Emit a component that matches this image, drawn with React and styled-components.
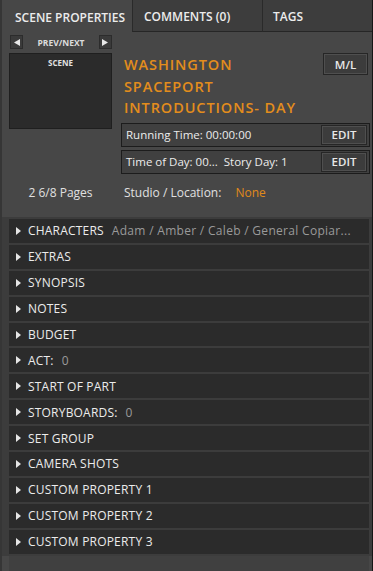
import React from 'react';
import styled, { createGlobalStyle } from 'styled-components';

const GlobalStyle = createGlobalStyle`
  html, body {
    margin: 0;
    padding: 0;
    background: #474747;
  }
  * {
    box-sizing: border-box;
  }
`;

const Panel = styled.div`
  width: 373px;
  height: 571px;
  background: #474747;
  border-left: 2px solid #363636;
  border-right: 1px solid #161616;
  font-family: "Open Sans", "Noto Sans", sans-serif;
  color: #e4e4e4;
  display: flex;
  flex-direction: column;
  overflow: hidden;
`;

const TabBar = styled.div`
  display: flex;
  height: 32px;
  flex-shrink: 0;
`;

const Tab = styled.div`
  width: ${p => p.$w}px;
  flex: ${p => (p.$grow ? 1 : 'none')};
  display: flex;
  align-items: center;
  padding: 2px 0 0 ${p => p.$pl}px;
  font-size: 12px;
  font-weight: 600;
  white-space: nowrap;
  color: #ececec;
  background: ${p => (p.$active ? '#474747' : '#3d3d3d')};
  border-bottom: ${p => (p.$active ? 'none' : '1px solid #262626')};
  border-left: ${p => (p.$active ? 'none' : '1px solid #2a2a2a')};
`;

const Top = styled.div`
  display: grid;
  grid-template-columns: 103px 1fr;
  column-gap: 9px;
  padding: 3px 2px 0 7px;
`;

const LeftCol = styled.div`
  display: flex;
  flex-direction: column;
`;

const NavRow = styled.div`
  display: flex;
  align-items: center;
  justify-content: space-between;
  height: 14px;
  padding-left: 1px;
`;

const ArrowBtn = styled.div`
  width: 13px;
  height: 14px;
  background: #3a3a3a;
  border: 1px solid #2c2c2c;
  display: flex;
  align-items: center;
  justify-content: center;
`;

const NavLabel = styled.span`
  font-size: 8.5px;
  font-weight: 700;
  color: #dcdcdc;
`;

const Thumb = styled.div`
  margin-top: 4px;
  height: 76px;
  background: #2b2b2b;
  border: 1px solid #1f1f1f;
  display: flex;
  justify-content: center;
  padding-top: 3px;
  font-size: 8px;
  font-weight: 700;
  color: #e0e0e0;
`;

const Pages = styled.div`
  margin-top: 55px;
  text-align: center;
  font-size: 12px;
  color: #e0e0e0;
`;

const RightCol = styled.div`
  display: flex;
  flex-direction: column;
  padding-top: 18px;
`;

const Header = styled.div`
  display: flex;
  justify-content: space-between;
  align-items: flex-start;
  padding-left: 3px;
`;

const Title = styled.div`
  margin-top: 1px;
  font-size: 14.5px;
  font-weight: 600;
  line-height: 21.5px;
  letter-spacing: 0.9px;
  color: #e38d1c;
`;

const SmallBtn = styled.div`
  width: ${p => p.$w}px;
  height: ${p => p.$h}px;
  margin-right: ${p => p.$mr || 0}px;
  background: #3c3c3c;
  border: 1px solid #262626;
  box-shadow: inset 0 0 0 1px #4f4f4f;
  display: flex;
  align-items: center;
  justify-content: center;
  font-size: 11.5px;
  font-weight: 600;
  color: #e8e8e8;
  flex-shrink: 0;
`;

const Field = styled.div`
  margin-top: ${p => p.$mt}px;
  height: 24px;
  border: 1px solid #1c1c1c;
  background: #404040;
  display: flex;
  align-items: center;
  justify-content: space-between;
  padding-left: 4px;
  font-size: 11.5px;
  color: #ececec;
`;

const Studio = styled.div`
  margin-top: 10px;
  padding-left: 3px;
  font-size: 12px;
  color: #e0e0e0;
  display: flex;
  gap: 14px;
`;

const Orange = styled.span`
  color: #e08a1a;
`;

const List = styled.div`
  margin-top: 16px;
  padding: 2px 3px 2px 7px;
  background: #3c3c3c;
  display: flex;
  flex-direction: column;
  gap: 2px;
`;

const Row = styled.div`
  height: 23.9px;
  background: #2b2b2b;
  display: flex;
  align-items: center;
  padding-left: 7px;
  font-size: 12px;
  white-space: nowrap;
  overflow: hidden;
`;

const Caret = styled.span`
  width: 0;
  height: 0;
  border-top: 4px solid transparent;
  border-bottom: 4px solid transparent;
  border-left: 5px solid #e6e6e6;
  margin-right: 7px;
  flex-shrink: 0;
`;

const RowLabel = styled.span`
  font-weight: 500;
  color: #ececec;
  letter-spacing: 0.2px;
`;

const RowValue = styled.span`
  margin-left: 8px;
  color: #9a9a9a;
  letter-spacing: 0.3px;
`;

const Footer = styled.div`
  flex: 1;
  background: #404040;
  margin: 0 3px 0 7px;
`;

const Tri = ({ dir }) => (
  <svg width="6" height="7" viewBox="0 0 6 7">
    {dir === 'left'
      ? <polygon points="6,0 6,7 0,3.5" fill="#e6e6e6" />
      : <polygon points="0,0 0,7 6,3.5" fill="#e6e6e6" />}
  </svg>
);

const rows = [
  { label: 'CHARACTERS', value: 'Adam / Amber / Caleb / General Copiar...' },
  { label: 'EXTRAS' },
  { label: 'SYNOPSIS' },
  { label: 'NOTES' },
  { label: 'BUDGET' },
  { label: 'ACT:', value: '0' },
  { label: 'START OF PART' },
  { label: 'STORYBOARDS:', value: '0' },
  { label: 'SET GROUP' },
  { label: 'CAMERA SHOTS' },
  { label: 'CUSTOM PROPERTY 1' },
  { label: 'CUSTOM PROPERTY 2' },
  { label: 'CUSTOM PROPERTY 3' },
];

const App = () => (
  <>
    <GlobalStyle />
    <Panel>
      <TabBar>
        <Tab $active $w={130} $pl={13}>SCENE PROPERTIES</Tab>
        <Tab $w={130} $pl={11}>COMMENTS (0)</Tab>
        <Tab $grow $pl={10}>TAGS</Tab>
      </TabBar>
      <Top>
        <LeftCol>
          <NavRow>
            <ArrowBtn><Tri dir="left" /></ArrowBtn>
            <NavLabel>PREV/NEXT</NavLabel>
            <ArrowBtn><Tri dir="right" /></ArrowBtn>
          </NavRow>
          <Thumb>SCENE</Thumb>
          <Pages>2 6/8 Pages</Pages>
        </LeftCol>
        <RightCol>
          <Header>
            <Title>
              WASHINGTON<br />SPACEPORT<br />INTRODUCTIONS- DAY
            </Title>
            <SmallBtn $w={45} $h={22} $mr={2}>M/L</SmallBtn>
          </Header>
          <Field $mt={4}>
            Running Time: 00:00:00
            <SmallBtn $w={46} $h={20} $mr={2}>EDIT</SmallBtn>
          </Field>
          <Field $mt={3}>
            Time of Day: 00...&nbsp; Story Day: 1
            <SmallBtn $w={46} $h={20} $mr={2}>EDIT</SmallBtn>
          </Field>
          <Studio>
            Studio / Location:
            <Orange>None</Orange>
          </Studio>
        </RightCol>
      </Top>
      <List>
        {rows.map(r => (
          <Row key={r.label}>
            <Caret />
            <RowLabel>{r.label}</RowLabel>
            {r.value && <RowValue>{r.value}</RowValue>}
          </Row>
        ))}
      </List>
      <Footer />
    </Panel>
  </>
);

export default App;
